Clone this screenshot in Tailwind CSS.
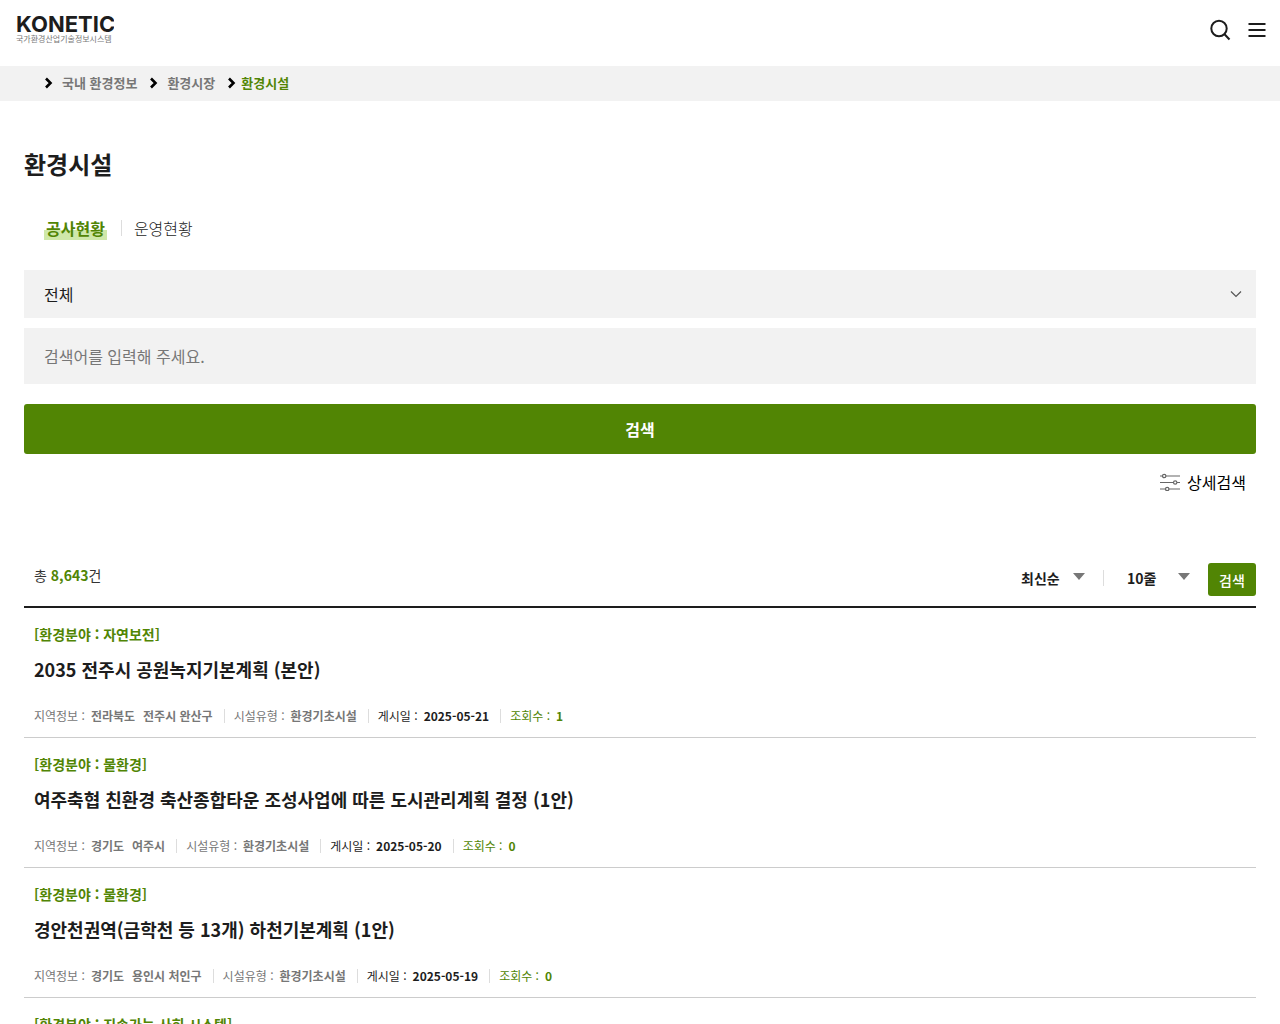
<!DOCTYPE html>
<html lang="ko">
<head>
    <meta charset="UTF-8">
    <meta name="viewport" content="width=device-width, initial-scale=1.0">
    <title>환경시설 | KONETIC</title>
    <script src="https://cdn.jsdelivr.net/npm/@tailwindcss/browser@4"></script>
</head>
<body class="bg-white text-[#1d1d1d] font-['Noto_Sans_CJK_KR','Noto_Sans',sans-serif]">
    <header class="flex items-start justify-between h-[66px] pl-4 pr-[11px]">
        <a href="#" class="block pt-[13px]">
            <span class="block w-[98px] overflow-hidden whitespace-nowrap font-['Inter',sans-serif] text-[22px] leading-[22px] font-bold">KONETIC</span>
            <span class="block text-[8px] leading-2 text-[#777]">국가환경산업기술정보시스템</span>
        </a>
        <div class="flex gap-[13px] pt-[18px]">
            <button type="button" aria-label="검색 열기">
                <svg class="size-6" viewBox="0 0 24 24" fill="none" stroke="#1d1d1d" stroke-width="2">
                    <circle cx="11" cy="10.500" r="7.700"/>
                    <path d="M16.300 16l5.200 5.500"/>
                </svg>
            </button>
            <button type="button" aria-label="전체메뉴">
                <svg class="size-6" viewBox="0 0 24 24" fill="none" stroke="#1d1d1d" stroke-width="2">
                    <path d="M3.500 6h17M3.500 12h17M3.500 18h17"/>
                </svg>
            </button>
        </div>
    </header>

    <nav class="bg-[#f2f2f2] h-[35px] pl-11 pb-[2px]" aria-label="현재 위치">
        <ol class="flex items-center h-full text-[13px] leading-5 font-bold text-[#777]">
            <li class="flex items-center gap-2 pr-3">
                <svg class="w-[10px] h-3" viewBox="0 0 10 12" fill="none" stroke="#000" stroke-width="2.600"><path d="M2 1.500L6.500 6L2 10.500"/></svg>
                <a href="#">국내 환경정보</a>
            </li>
            <li class="flex items-center gap-2 pr-3">
                <svg class="w-[10px] h-3" viewBox="0 0 10 12" fill="none" stroke="#000" stroke-width="2.600"><path d="M2 1.500L6.500 6L2 10.500"/></svg>
                <a href="#">환경시장</a>
            </li>
            <li class="flex items-center gap-1">
                <svg class="w-[10px] h-3" viewBox="0 0 10 12" fill="none" stroke="#000" stroke-width="2.600"><path d="M2 1.500L6.500 6L2 10.500"/></svg>
                <a href="#" class="text-[#518504]" aria-current="page">환경시설</a>
            </li>
        </ol>
    </nav>

    <main class="px-6 pt-[43px]">
        <h1 class="text-2xl leading-10 font-bold">환경시설</h1>

        <ul class="flex items-center mt-8 pl-5 text-base leading-6">
            <li><a href="#" class="px-[2px] font-bold text-[#518504] bg-linear-to-b from-transparent from-60% to-[#cfe8a9] to-60%">공사현황</a></li>
            <li class="ml-[14px] h-4 w-px bg-[#ddd]"></li>
            <li class="ml-3"><a href="#" class="font-light">운영현황</a></li>
        </ul>

        <!-- search form -->
        <form class="mt-[30px]">
            <div class="relative">
                <select aria-label="검색 구분" class="block w-full h-12 pl-5 pr-10 appearance-none bg-[#f2f2f2] text-base">
                    <option>전체</option>
                </select>
                <svg class="absolute right-3 top-5 w-4 h-2 pointer-events-none" viewBox="0 0 16 8" fill="none" stroke="#555" stroke-width="1.200"><path d="M3 1.500L8 6.500L13 1.500"/></svg>
            </div>
            <input type="text" aria-label="검색어" placeholder="검색어를 입력해 주세요." class="block w-full h-14 mt-[10px] px-5 bg-[#f2f2f2] text-base placeholder:text-[#777]">
            <button type="submit" class="block w-full h-[50px] mt-5 rounded-[3px] bg-[#518504] text-white text-base font-bold">검색</button>
        </form>
        <div class="flex justify-end mt-4 pr-[10px]">
            <button type="button" class="flex items-center gap-[7px] text-base leading-6 text-black">
                <svg class="w-5 h-[18px]" viewBox="0 0 20 18" fill="none" stroke="#666" stroke-width="1.200">
                    <path d="M0 3h2.500M6 3h14M0 9.500h13.500M17 9.500h3M0 16h5.500M9 16h11"/>
                    <circle cx="4.200" cy="3" r="1.700"/>
                    <circle cx="15.200" cy="9.500" r="1.700"/>
                    <circle cx="7.200" cy="16" r="1.700"/>
                </svg>
                상세검색
            </button>
        </div>

        <!-- result count and sorting -->
        <div class="flex items-start justify-between mt-[69px] h-[43px] pl-[10px]">
            <p class="text-sm leading-6 text-[#333]">총 <strong class="text-[#518504]">8,643</strong>건</p>
            <form class="flex items-start text-sm">
                <div class="relative">
                    <select aria-label="정렬" class="block w-16 h-[29px] appearance-none font-bold">
                        <option>최신순</option>
                    </select>
                    <svg class="absolute right-0 top-[10px] w-3 h-2 pointer-events-none" viewBox="0 0 12 8" fill="#777"><path d="M0 0h12L6 7z"/></svg>
                </div>
                <span class="w-px h-4 mt-[7px] ml-[18px] mr-[23px] bg-[#ddd]"></span>
                <div class="relative">
                    <select aria-label="줄 수" class="block w-[63px] h-[29px] appearance-none font-bold">
                        <option>10줄</option>
                    </select>
                    <svg class="absolute right-0 top-[10px] w-3 h-2 pointer-events-none" viewBox="0 0 12 8" fill="#777"><path d="M0 0h12L6 7z"/></svg>
                </div>
                <button type="submit" class="w-12 h-[33px] ml-[18px] rounded-[3px] bg-[#518504] text-white font-medium">검색</button>
            </form>
        </div>

        <ul id="facility-list" class="border-t-2 border-[#1d1d1d]"></ul>
    </main>

    <script>
        const facilities = [
            { field: '자연보전', title: '2035 전주시 공원녹지기본계획 (본안)', region: ['전라북도', '전주시 완산구'], date: '2025-05-21', views: 1 },
            { field: '물환경', title: '여주축협 친환경 축산종합타운 조성사업에 따른 도시관리계획 결정 (1안)', region: ['경기도', '여주시'], date: '2025-05-20', views: 0 },
            { field: '물환경', title: '경안천권역(금학천 등 13개) 하천기본계획 (1안)', region: ['경기도', '용인시 처인구'], date: '2025-05-19', views: 0 },
            { field: '지속가능 사회 시스템', title: '', region: [], date: '', views: 0 }
        ];

        const bar = '<span class="w-px h-[14px] ml-[11px] mr-[9px] bg-[#ddd]"></span>';

        document.getElementById('facility-list').innerHTML = facilities.map((item) => `
            <li class="h-[130px] px-[10px] pt-[14px] border-b border-[#ccc]">
                <p class="text-sm leading-6 font-bold text-[#518504]">[환경분야 : ${item.field}]</p>
                ${item.title ? `
                <h2 class="mt-[9px] text-lg leading-7 font-bold"><a href="#">${item.title}</a></h2>
                <div class="flex items-center mt-[23px] text-xs leading-5 whitespace-nowrap">
                    <p class="flex text-[#777]">지역정보 : <strong class="ml-[6px]">${item.region[0]}</strong><strong class="ml-2">${item.region[1]}</strong></p>
                    ${bar}
                    <p class="flex text-[#777]">시설유형 : <strong class="ml-[6px]">환경기초시설</strong></p>
                    ${bar}
                    <p class="flex">게시일 : <strong class="ml-[6px]">${item.date}</strong></p>
                    ${bar}
                    <p class="flex text-[#518504]">조회수 : <strong class="ml-[6px]">${item.views}</strong></p>
                </div>` : ''}
            </li>
        `).join('');
    </script>
</body>
</html>
